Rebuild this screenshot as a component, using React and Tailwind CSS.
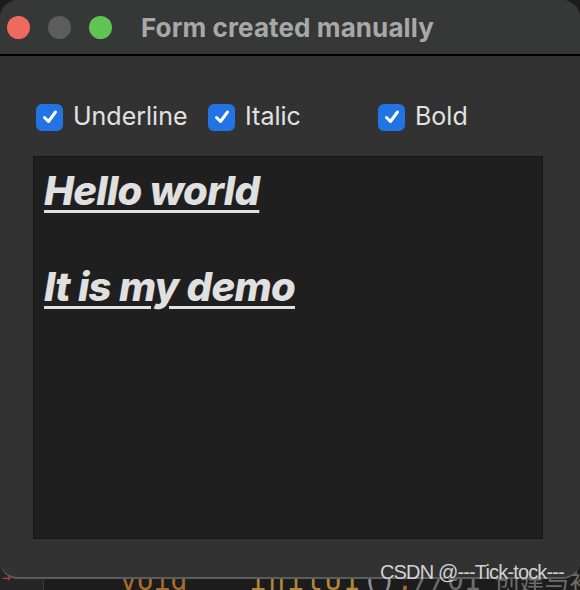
export default function App() {
  const font = { fontFamily: 'Inter, "Noto Sans", sans-serif' }
  return (
    <div className="relative w-[580px] h-[590px] overflow-hidden bg-[#1c1c1c] flex flex-col" style={font}>
      <div className="relative z-10 h-[579px] shrink-0 rounded-[18px] bg-[#323232] border-b-2 border-[#5c5c5c] flex flex-col overflow-hidden">
        <div className="h-[56px] shrink-0 bg-[#363837] border-b-2 border-black flex items-center pl-[7px]">
          <div className="flex gap-[18px]">
            <span className="w-[23px] h-[23px] rounded-full bg-[#ee6a5e]" />
            <span className="w-[23px] h-[23px] rounded-full bg-[#5c5d5c]" />
            <span className="w-[23px] h-[23px] rounded-full bg-[#5ec452]" />
          </div>
          <div className="ml-[29px] text-[26px] font-bold text-[#a8a8a8] tracking-[0.1px]">Form created manually</div>
        </div>
        <div className="flex items-center h-[56px] mt-[33px] pl-[36px] text-[25px] text-[#e2e2e2]">
          <Check label="Underline" w="w-[172px]" />
          <Check label="Italic" w="w-[170px]" />
          <Check label="Bold" w="" />
        </div>
        <div className="ml-[33px] w-[510px] h-[383px] mt-[11px] bg-[#1f1f1f] border border-[#161616] pl-[10px] pt-[10px] text-[40px] font-extrabold italic text-[#e0e0e0] leading-[48px] tracking-[-0.7px]">
          <div className="underline decoration-[3px] underline-offset-[5px]">Hello world</div>
          <div className="mt-[48px] underline decoration-[3px] underline-offset-[5px]">It is my demo</div>
        </div>
      </div>
      <div className="-mt-[14px] h-[25px] shrink-0 flex items-center bg-[#1c1c1c] overflow-hidden whitespace-nowrap" style={{ fontFamily: '"DejaVu Sans Mono", monospace' }}>
        <div className="w-[44px] h-full shrink-0 bg-[#252525] border-r border-[#3a3a3a] flex items-end pb-[2px] pl-[2px] text-[#b04040] text-[14px]">→</div>
        <div className="flex items-center text-[28px] leading-none pt-[6px]">
          <span className="ml-[76px] text-[#a56d32]">void</span>
          <span className="ml-[62px] text-[#b0893a] tracking-[2px]">initUI</span>
          <span className="text-[#8a9098]">()</span>
          <span className="text-[#a56d32]">;</span>
          <span className="text-[#6c6c6c]">//01</span>
          <span className="ml-[14px] text-[#6c6c6c] text-[25px]" style={{ fontFamily: '"Noto Sans CJK SC", sans-serif' }}>创建与初始</span>
        </div>
      </div>
      <div className="absolute z-20 left-[380px] top-[557px] text-[20px] text-[#d2d2d2] tracking-[-0.85px]" style={{ fontFamily: '"Liberation Sans", sans-serif' }}>CSDN @---Tick-tock---</div>
    </div>
  )
}

function Check({ label, w }) {
  return (
    <div className={`flex items-center gap-[10px] ${w}`}>
      <span className="w-[27px] h-[27px] rounded-[6px] bg-[#2273e3] flex items-center justify-center">
        <svg width="18" height="18" viewBox="0 0 18 18">
          <path d="M3.5 9.5 L7.5 13.5 L14.5 4" stroke="#fff" strokeWidth="3" fill="none" strokeLinecap="round" strokeLinejoin="round" />
        </svg>
      </span>
      <span>{label}</span>
    </div>
  )
}
